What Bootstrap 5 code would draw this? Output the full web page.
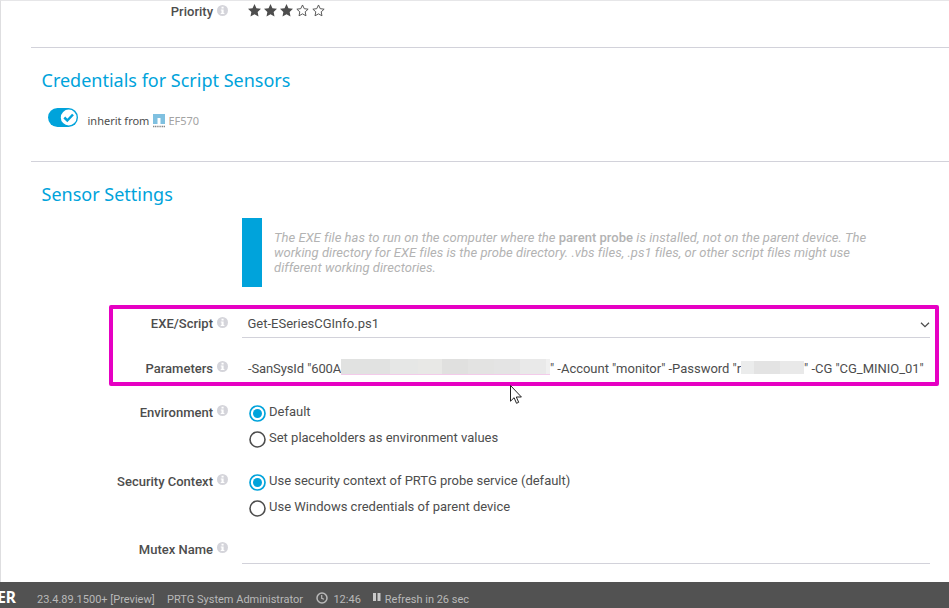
<!DOCTYPE html>
<html lang="en">
<head>
<meta charset="utf-8">
<meta name="viewport" content="width=device-width, initial-scale=1">
<title>Sensor Settings</title>
<link href="https://cdn.jsdelivr.net/npm/bootstrap@5.3.0/dist/css/bootstrap.min.css" rel="stylesheet">
<style>
body{font-family:Roboto,"Liberation Sans",sans-serif;font-size:13px;line-height:20px;color:#4d4d4d;background:#fff}
.page{height:100vh;min-height:608px}
.pane{border-left:1px solid #dedee0;border-top:1px solid #e6e6e8}
.section{margin-left:30px;border-bottom:1px solid #d2d2da}
.sec-priority{height:47px}
.sec-priority .setting{padding-top:1px}
.sec-cred{height:114px}
.section-title{font-family:"Noto Sans",sans-serif;font-size:18px;line-height:24px;font-weight:400;color:#00a3db;margin:0 0 0 10.5px;padding-top:20px}
.inherit{font-family:"Noto Sans",sans-serif;font-size:11px;margin:14px 0 0 17px;height:27px}
.inherit-text{margin-left:9.500px;padding-top:5px}
.device{color:#a3a3a3;margin-left:3px;padding-top:5px}
.netapp{margin:8px 0 0 4px}
.switch{width:30px;height:19px;margin-top:2px}
.setting{margin-left:-31px;padding-right:19px}
.setting-name{width:213px;font-weight:500;flex:none;text-align:right}
.info{width:11px;height:11px;margin:3px 0 0 4px;flex:none}
.value{margin-left:14px;min-width:0}
.field{border-bottom:1px solid #d2d2da;padding-left:6px;height:24px}
.row-exe .field{padding-left:5.5px}
.note{margin:12px 0 0 211px;height:69px;border-left:20px solid #00a3db;padding:12px 60px 0 12px;color:#b3b3b3;line-height:15px;font-style:italic;letter-spacing:.035px}
.note b{font-style:normal;font-weight:500}
.row-exe{margin-top:27px}
.row-par{margin-top:21px;height:20px}
.row-par .info,.row-env .info,.row-sec .info,.row-mtx .info{margin-top:2px}
.sec-priority .info{margin-top:3px}
.row-exe .info{margin-top:3px}
.row-env{margin-top:24px}
.row-sec{margin-top:17px}
.row-mtx{margin-top:16px}
.row-sec,.row-env{height:52px}
.choices{margin-top:-1px}
.choice{height:26px;padding-left:7px}
.choice svg{width:17px;height:17px;margin:3px 3px 0 0;flex:none}
.hl{position:absolute;left:109px;top:305px;width:830px;height:81px;border:4px solid #e600c3;border-radius:2px}
.pointer{position:absolute;left:510px;top:385px;width:12px;height:19px}
.redact{height:16px;flex:none}
.par-a{width:93px;letter-spacing:-.11px}
.par-b{letter-spacing:-.02px}
.par-c{letter-spacing:-.03px}
.redact-id{width:209px;background:linear-gradient(90deg,#e1e2e1 0 49px,#e6e7e6 49px 77px,#e8e8e6 77px 101px,#e0e0df 101px 127px,#e3e3e2 127px 153px,#e4e4e4 153px 179px,#e9e9e9 179px 205px,#f0f0f0 205px);border-bottom:1px solid #f3cbea}
.redact-pw{width:63px;height:13px;margin-top:2px;background:linear-gradient(90deg,#ebecec 0 13px,#e3e3e3 13px 39px,#e9e9e9 39px)}
.footer-bar{height:26px;background:#525252;color:#b9b9b9;font-size:11px;line-height:14px;flex:none}
.brand{width:16px;height:26px;font-family:"Noto Sans",sans-serif;font-weight:700;font-size:15.500px;line-height:30px;color:#fff}
.version{margin-left:21px}
.user{margin-left:12.500px}
.foot-item{padding-top:11px}
.clock{margin-top:-1px;margin-right:5px}
.time{margin-left:13.500px}
.stars{margin-left:20px;margin-top:2px;gap:3px}
.stars svg{width:13px;height:13px}
</style>
<script src="https://cdn.jsdelivr.net/npm/bootstrap@5.3.0/dist/js/bootstrap.bundle.min.js"></script>
</head>
<body class="overflow-hidden">
<svg width="0" height="0" class="position-absolute">
  <symbol id="i-info" viewBox="0 0 10 10"><circle cx="5" cy="5" r="5" fill="#d4d4da"/><path d="M4.1 1.6h1.9v1.5H4.1zM3.4 4h2.6v3.2h.7v1H3.4v-1h.7V5h-.7z" fill="#fff"/></symbol>
  <symbol id="i-star" viewBox="0 0 12 12"><path d="M6 0l1.800 3.900 4.200.5-3.100 2.900.8 4.300L6 9.500l-3.700 2.100.8-4.300L0 4.400l4.200-.5z" fill="#4d4d4d"/></symbol>
  <symbol id="i-star-o" viewBox="0 0 12 12"><path d="M6 .9l1.600 3.400 3.600.5-2.700 2.400.7 3.700L6 9.100l-3.200 1.800.7-3.700L.8 4.800l3.600-.5z" fill="#fff" stroke="#555" stroke-width=".9"/></symbol>
  <symbol id="i-on" viewBox="0 0 17 17"><circle cx="8.500" cy="8.500" r="7.500" fill="#fff" stroke="#00a3db" stroke-width="1.700"/><circle cx="8.500" cy="8.500" r="4.500" fill="#00a3db"/></symbol>
  <symbol id="i-off" viewBox="0 0 17 17"><circle cx="8.500" cy="8.500" r="7.500" fill="#fff" stroke="#4d4d4d" stroke-width="1.600"/></symbol>
</svg>
<div class="page d-flex flex-column position-relative">
  <main class="pane flex-grow-1">
    <section class="section sec-priority">
      <div class="setting d-flex">
        <div class="setting-name">Priority</div>
        <svg class="info"><use href="#i-info"/></svg>
        <div class="stars d-flex">
          <svg><use href="#i-star"/></svg>
          <svg><use href="#i-star"/></svg>
          <svg><use href="#i-star"/></svg>
          <svg><use href="#i-star-o"/></svg>
          <svg><use href="#i-star-o"/></svg>
        </div>
      </div>
    </section>
    <section class="section sec-cred">
      <h2 class="section-title">Credentials for Script Sensors</h2>
      <div class="inherit d-flex">
        <svg class="switch" viewBox="0 0 30 19"><rect width="30" height="19" rx="9.500" fill="#00a3db"/><circle cx="20.700" cy="9.500" r="7.900" fill="#fff"/><path d="M16.300 9.500l3 3 5.700-6" fill="none" stroke="#00a3db" stroke-width="2.500"/></svg>
        <span class="inherit-text">inherit from</span>
        <svg class="netapp" width="12" height="14" viewBox="0 0 12 14"><path d="M0 0h12v10H7.500V4h-3v6H0z" fill="#7fc0e0"/><path d="M0 12.500h12" stroke="#888" stroke-width="1.600" stroke-dasharray="1.200 .6"/></svg>
        <span class="device">EF570</span>
      </div>
    </section>
    <section class="section border-0">
      <h2 class="section-title">Sensor Settings</h2>
      <div class="note">The EXE file has to run on the computer where the <b>parent probe</b> is installed, not on the parent device. The<br>working directory for EXE files is the probe directory. .vbs files, .ps1 files, or other script files might use<br>different working directories.</div>
      <div class="setting row-exe d-flex">
        <div class="setting-name">EXE/Script</div>
        <svg class="info"><use href="#i-info"/></svg>
        <div class="value field flex-grow-1 d-flex justify-content-between">
          <span>Get-ESeriesCGInfo.ps1</span>
          <svg class="mt-2" width="10" height="6"><path d="M1 .8l4 3.800 4-3.800" fill="none" stroke="#4d4d4d" stroke-width="1.300"/></svg>
        </div>
      </div>
      <div class="setting row-par d-flex text-nowrap">
        <div class="setting-name">Parameters</div>
        <svg class="info"><use href="#i-info"/></svg>
        <div class="value ps-1 ms-3 d-flex">
          <span class="par-a">-SanSysId "600A</span><span class="redact redact-id"></span><span class="par-b">" -Account "monitor" -Password "r</span><span class="redact redact-pw"></span><span class="par-c">" -CG "CG_MINIO_01"</span>
        </div>
      </div>
      <div class="setting row-env d-flex">
        <div class="setting-name">Environment</div>
        <svg class="info"><use href="#i-info"/></svg>
        <div class="value choices">
          <div class="choice d-flex"><svg><use href="#i-on"/></svg><span>Default</span></div>
          <div class="choice d-flex"><svg><use href="#i-off"/></svg><span>Set placeholders as environment values</span></div>
        </div>
      </div>
      <div class="setting row-sec d-flex">
        <div class="setting-name">Security Context</div>
        <svg class="info"><use href="#i-info"/></svg>
        <div class="value choices">
          <div class="choice d-flex"><svg><use href="#i-on"/></svg><span>Use security context of PRTG probe service (default)</span></div>
          <div class="choice d-flex"><svg><use href="#i-off"/></svg><span>Use Windows credentials of parent device</span></div>
        </div>
      </div>
      <div class="setting row-mtx d-flex">
        <div class="setting-name">Mutex Name</div>
        <svg class="info"><use href="#i-info"/></svg>
        <div class="value field flex-grow-1"></div>
      </div>
    </section>
  </main>
  <footer class="footer-bar d-flex">
    <div class="brand d-flex justify-content-end">ER</div>
    <span class="foot-item version">23.4.89.1500+ [Preview]</span>
    <span class="foot-item user">PRTG System Administrator</span>
    <span class="foot-item time d-flex"><svg class="clock" width="12" height="12"><circle cx="6" cy="6" r="5" fill="none" stroke="#b9b9b9" stroke-width="1.500"/><path d="M5.700 3v3.300l2.300 1" fill="none" stroke="#b9b9b9" stroke-width="1.200"/></svg>12:46</span>
    <span class="foot-item ms-2 d-flex"><svg class="ms-1 me-1" width="8" height="9"><path d="M0 0h3v8H0zM4.500 0h3v8h-3z" fill="#c9c9c9"/></svg>Refresh in 26 sec</span>
  </footer>
  <div class="hl"></div>
  <svg class="pointer" viewBox="0 0 12 19"><path d="M.5.500v15.700l3.600-3.500 2.400 5.600 2.200-1-2.400-5.300h5.100z" fill="#fff" stroke="#222" stroke-width="1"/></svg>
</div>
</body>
</html>
